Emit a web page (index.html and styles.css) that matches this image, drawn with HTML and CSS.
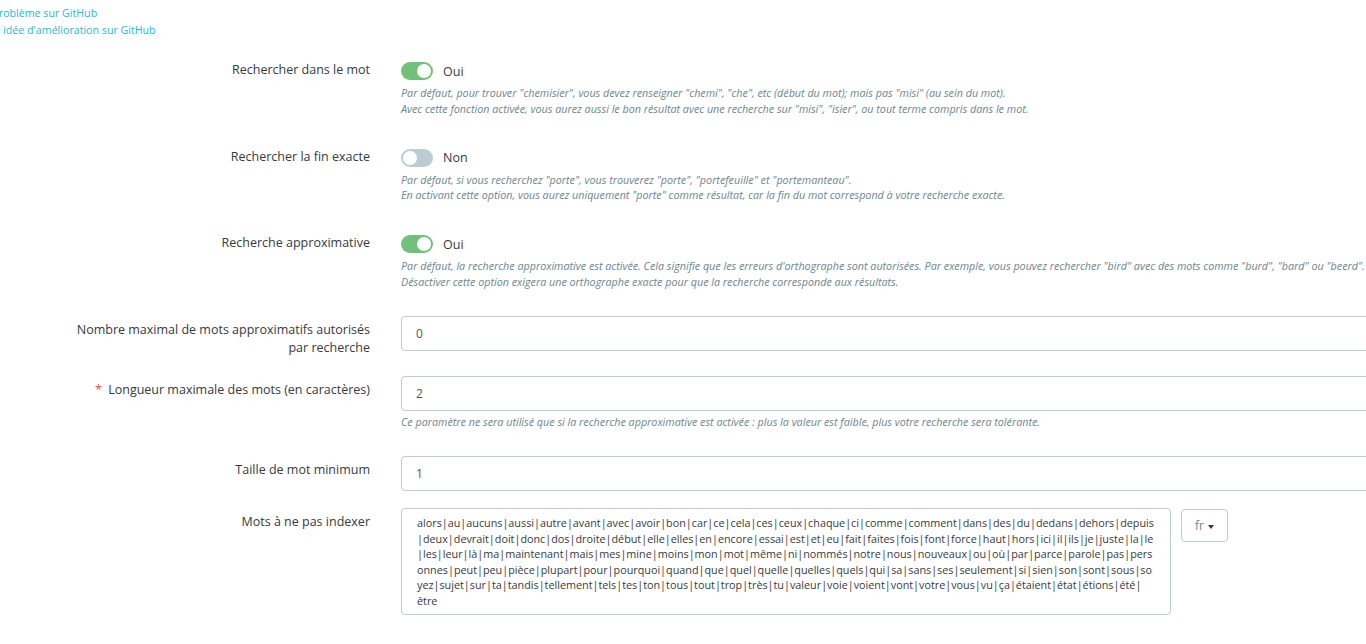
FILE: index.html
```html
<!DOCTYPE html>
<html lang="fr">
<head>
  <meta charset="UTF-8" />
  <meta name="viewport" content="width=device-width, initial-scale=1.0"/>
  <title>Paramètres de recherche</title>
  <link rel="stylesheet" href="styles.css">
</head>
<body>
  <div class="page">
    <div class="help-links">
      <a href="#">Signaler un problème sur GitHub</a>
      <a href="#">Suggérer une idée d'amélioration sur GitHub</a>
    </div>

    <form class="settings">
      <!-- RECHERCHE DANS LE MOT -->
      <div class="form-group">
        <label class="form-label">Rechercher dans le mot</label>
        <div class="form-field switch-field">
          <div class="switch-row"><span class="switch on"></span><span>Oui</span></div>
          <p class="help">Par défaut, pour trouver "chemisier", vous devez renseigner "chemi", "che", etc (début du mot); mais pas "misi" (au sein du mot).<br>Avec cette fonction activée, vous aurez aussi le bon résultat avec une recherche sur "misi", "isier", ou tout terme compris dans le mot.</p>
        </div>
      </div>

      <!-- FIN EXACTE -->
      <div class="form-group">
        <label class="form-label">Rechercher la fin exacte</label>
        <div class="form-field switch-field">
          <div class="switch-row"><span class="switch"></span><span>Non</span></div>
          <p class="help">Par défaut, si vous recherchez "porte", vous trouverez "porte", "portefeuille" et "portemanteau".<br>En activant cette option, vous aurez uniquement "porte" comme résultat, car la fin du mot correspond à votre recherche exacte.</p>
        </div>
      </div>

      <!-- APPROXIMATIVE -->
      <div class="form-group">
        <label class="form-label">Recherche approximative</label>
        <div class="form-field switch-field">
          <div class="switch-row"><span class="switch on"></span><span>Oui</span></div>
          <p class="help">Par défaut, la recherche approximative est activée. Cela signifie que les erreurs d'orthographe sont autorisées. Par exemple, vous pouvez rechercher "bird" avec des mots comme "burd", "bard" ou "beerd".<br>Désactiver cette option exigera une orthographe exacte pour que la recherche corresponde aux résultats.</p>
        </div>
      </div>

      <div class="form-group tight">
        <label class="form-label" for="fuzzy_max">Nombre maximal de mots approximatifs autorisés par recherche</label>
        <div class="form-field">
          <input type="text" id="fuzzy_max" class="text-input" value="0">
        </div>
      </div>

      <div class="form-group">
        <label class="form-label" for="max_length"><span class="required">*</span> Longueur maximale des mots (en caractères)</label>
        <div class="form-field">
          <input type="text" id="max_length" class="text-input" value="2">
          <p class="help">Ce paramètre ne sera utilisé que si la recherche approximative est activée : plus la valeur est faible, plus votre recherche sera tolérante.</p>
        </div>
      </div>

      <div class="form-group small-gap">
        <label class="form-label" for="min_size">Taille de mot minimum</label>
        <div class="form-field">
          <input type="text" id="min_size" class="text-input" value="1">
        </div>
      </div>

      <div class="form-group">
        <label class="form-label" for="stopwords">Mots à ne pas indexer</label>
        <div class="form-field stopwords-field">
          <textarea id="stopwords" class="stopwords">alors|au|aucuns|aussi|autre|avant|avec|avoir|bon|car|ce|cela|ces|ceux|chaque|ci|comme|comment|dans|des|du|dedans|dehors|depuis|deux|devrait|doit|donc|dos|droite|début|elle|elles|en|encore|essai|est|et|eu|fait|faites|fois|font|force|haut|hors|ici|il|ils|je|juste|la|le|les|leur|là|ma|maintenant|mais|mes|mine|moins|mon|mot|même|ni|nommés|notre|nous|nouveaux|ou|où|par|parce|parole|pas|personnes|peut|peu|pièce|plupart|pour|pourquoi|quand|que|quel|quelle|quelles|quels|qui|sa|sans|ses|seulement|si|sien|son|sont|sous|soyez|sujet|sur|ta|tandis|tellement|tels|tes|ton|tous|tout|trop|très|tu|valeur|voie|voient|vont|votre|vous|vu|ça|étaient|état|étions|été|
être</textarea>
          <button type="button" class="lang-btn">fr <span class="caret"></span></button>
        </div>
      </div>
    </form>
  </div>
</body>
</html>
```

FILE: styles.css
```css
:root {
  --text: #363a41;
  --muted: #6c868e;
  --border: #bbcdd2;
  --link: #25b9d7;
  --success: #70c27a;
  --danger: #f54c3e;
}

* {
  box-sizing: border-box;
  font-family: "Open Sans", "Noto Sans", sans-serif;
}

body {
  margin: 0;
  background: #fff;
  color: var(--text);
  overflow: hidden;
}

.page {
  width: 1400px;
}

.help-links {
  margin-left: -66px;
  padding-top: 5px;
  font-size: 10.65px;
  line-height: 17px;
}

.help-links a {
  display: block;
  color: var(--link);
  text-decoration: none;
}

.settings {
  padding-left: 65px;
  margin-top: 17px;
}

.form-group {
  display: grid;
  grid-template-columns: 305px 1fr;
  column-gap: 31px;
  align-items: start;
  margin-bottom: 25.5px;
}

.form-group.tight {
  margin-bottom: 19.5px;
}

.form-group.small-gap {
  margin-bottom: 17px;
}

.form-label {
  text-align: right;
  font-size: 12.5px;
  line-height: 18px;
  padding-top: 5px;
}

.required {
  color: var(--danger);
  margin-right: 3px;
}

.switch-field {
  padding-top: 6px;
}

.switch-row {
  display: flex;
  align-items: center;
  gap: 10px;
  height: 18px;
  font-size: 12.5px;
}

.switch {
  position: relative;
  width: 32px;
  height: 18px;
  border-radius: 9px;
  background: var(--border);
}

.switch::after {
  content: "";
  position: absolute;
  top: 2px;
  left: 2px;
  width: 14px;
  height: 14px;
  border-radius: 50%;
  background: #fff;
}

.switch.on {
  background: var(--success);
}

.switch.on::after {
  left: 16px;
}

.help {
  margin: 6px 0 0;
  font-size: 10.75px;
  line-height: 15.5px;
  font-style: italic;
  color: var(--muted);
  white-space: nowrap;
}

.text-input {
  display: block;
  width: 100%;
  height: 35px;
  padding: 0 14px;
  border: 1px solid var(--border);
  border-radius: 4px;
  font-size: 12px;
  color: #555;
  background: #fff;
}

.form-field .text-input + .help {
  margin-top: 4px;
}

.stopwords-field {
  display: flex;
  align-items: flex-start;
  gap: 10px;
}

.stopwords {
  width: 770px;
  height: 107px;
  padding: 6px 15px;
  border: 1px solid var(--border);
  border-radius: 4px;
  font-size: 10.8px;
  line-height: 15.6px;
  color: var(--text);
  resize: none;
  word-break: break-all;
  overflow: hidden;
}

.lang-btn {
  width: 47px;
  height: 33px;
  margin-top: 1px;
  border: 1px solid var(--border);
  border-radius: 4px;
  background: #fff;
  color: var(--muted);
  font-size: 12px;
  cursor: pointer;
}

.caret {
  display: inline-block;
  vertical-align: middle;
  margin-left: 1px;
  border-top: 4px solid var(--text);
  border-left: 3px solid transparent;
  border-right: 3px solid transparent;
}
```
